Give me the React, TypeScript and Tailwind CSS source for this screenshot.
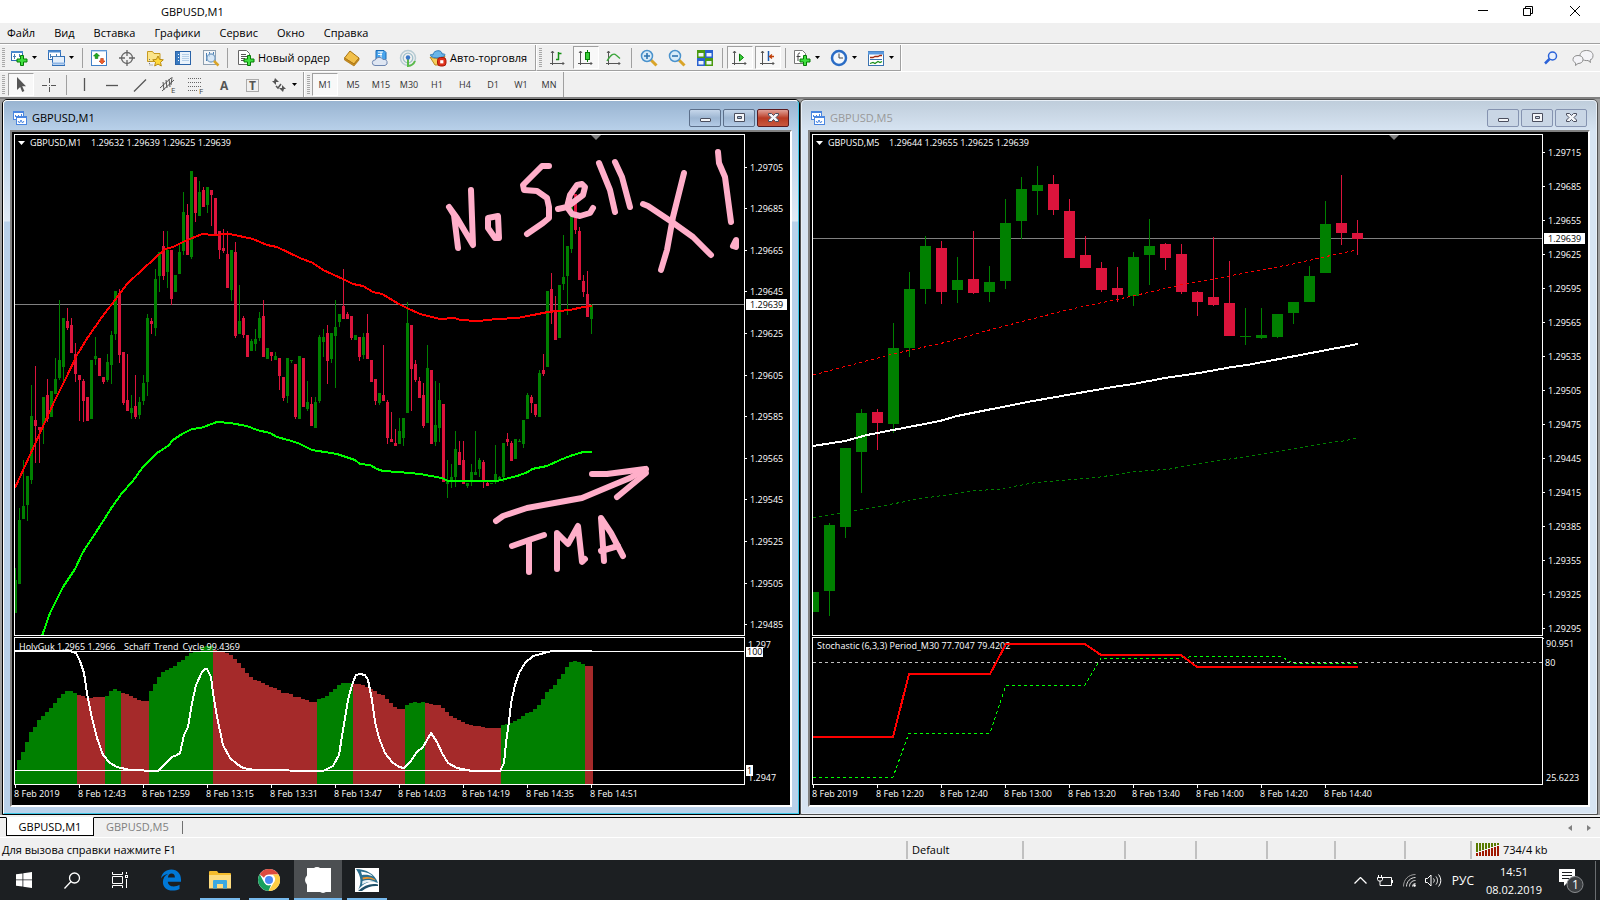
import type { ReactNode } from "react";

type Candle = [string, number, number, number, number];

const UP = "#008000";
const DOWN = "#dc143c";

// colour, high, body top, body bottom, low
const M1_CANDLES: Candle[] = [
  ["u", 568, 580, 613, 613], ["u", 508, 520, 584, 584], ["u", 460, 506, 519, 519], ["u", 476, 476, 505, 521],
  ["u", 385, 416, 480, 484], ["d", 366, 420, 426, 463], ["d", 427, 427, 430, 463], ["u", 397, 397, 425, 444],
  ["d", 379, 395, 419, 422], ["u", 391, 391, 417, 417], ["u", 358, 379, 394, 394], ["u", 300, 360, 378, 380],
  ["u", 318, 318, 367, 382], ["d", 308, 321, 328, 330], ["d", 318, 325, 353, 353], ["d", 343, 354, 374, 382],
  ["d", 375, 375, 380, 421], ["d", 379, 381, 401, 422], ["d", 397, 397, 421, 421], ["u", 360, 360, 419, 419],
  ["u", 337, 356, 359, 365], ["d", 358, 358, 376, 376], ["d", 377, 377, 382, 384], ["u", 354, 362, 380, 382],
  ["u", 331, 335, 365, 384], ["u", 291, 291, 334, 340], ["d", 289, 293, 355, 363], ["d", 352, 352, 403, 405],
  ["d", 354, 400, 411, 411], ["u", 395, 408, 413, 419], ["d", 375, 406, 417, 419], ["u", 397, 402, 415, 419],
  ["u", 375, 383, 401, 405], ["u", 314, 318, 382, 396], ["d", 318, 321, 324, 334], ["u", 269, 279, 328, 336],
  ["u", 252, 252, 276, 292], ["d", 231, 246, 276, 280], ["u", 231, 250, 272, 288], ["d", 250, 250, 299, 305],
  ["u", 275, 275, 292, 292], ["u", 244, 252, 274, 274], ["u", 192, 212, 251, 255], ["d", 204, 215, 255, 255],
  ["u", 171, 171, 257, 259], ["d", 177, 177, 213, 222], ["u", 181, 192, 216, 216], ["d", 187, 190, 207, 207],
  ["u", 187, 187, 205, 213], ["d", 190, 190, 195, 226], ["d", 198, 198, 235, 235], ["d", 231, 231, 250, 259],
  ["d", 229, 248, 251, 253], ["d", 231, 254, 288, 288], ["u", 250, 250, 290, 301], ["d", 242, 252, 336, 338],
  ["u", 285, 321, 334, 334], ["d", 316, 318, 335, 338], ["d", 335, 335, 357, 357], ["u", 339, 341, 351, 351],
  ["u", 329, 339, 344, 351], ["u", 312, 318, 338, 341], ["d", 300, 316, 357, 357], ["u", 348, 348, 359, 359],
  ["d", 352, 352, 356, 361], ["u", 352, 356, 360, 360], ["d", 358, 358, 376, 390], ["d", 377, 377, 398, 401],
  ["u", 358, 358, 396, 403], ["u", 360, 360, 361, 363], ["d", 364, 364, 417, 419], ["u", 356, 356, 419, 419],
  ["d", 358, 358, 407, 407], ["u", 381, 402, 409, 411], ["d", 397, 404, 426, 426], ["u", 397, 402, 428, 428],
  ["u", 335, 337, 401, 403], ["u", 329, 337, 342, 357], ["d", 325, 333, 361, 384], ["u", 333, 333, 359, 363],
  ["u", 300, 327, 336, 388], ["u", 314, 314, 322, 327], ["d", 269, 306, 319, 319], ["d", 312, 314, 319, 319],
  ["d", 316, 316, 338, 340], ["u", 335, 335, 340, 340], ["d", 337, 337, 357, 361], ["u", 333, 337, 355, 359],
  ["d", 314, 333, 359, 359], ["d", 360, 360, 382, 382], ["d", 379, 379, 401, 405], ["u", 393, 393, 403, 405],
  ["d", 345, 395, 401, 401], ["d", 400, 402, 438, 444], ["d", 412, 439, 442, 442], ["d", 429, 443, 446, 446],
  ["u", 418, 431, 444, 444], ["u", 418, 418, 438, 446], ["u", 302, 323, 413, 413], ["d", 325, 325, 369, 411],
  ["d", 360, 364, 380, 382], ["d", 377, 381, 398, 398], ["d", 383, 395, 426, 428], ["u", 345, 368, 423, 423],
  ["d", 370, 370, 444, 444], ["u", 381, 425, 442, 446], ["u", 383, 400, 428, 442], ["d", 404, 404, 482, 482],
  ["u", 460, 480, 484, 498], ["u", 464, 477, 480, 488], ["u", 431, 449, 477, 487], ["d", 441, 452, 465, 465],
  ["d", 441, 460, 484, 484], ["u", 483, 483, 486, 488], ["u", 464, 472, 480, 486], ["u", 431, 472, 475, 475],
  ["u", 458, 460, 469, 477], ["d", 460, 462, 481, 488], ["d", 480, 483, 486, 486], ["u", 483, 483, 484, 484],
  ["u", 445, 474, 482, 484], ["u", 476, 477, 480, 480], ["u", 443, 443, 477, 482], ["d", 433, 439, 442, 446],
  ["d", 441, 443, 461, 461], ["u", 439, 439, 459, 459], ["u", 439, 441, 442, 442], ["u", 420, 420, 444, 448],
  ["u", 393, 395, 419, 419], ["d", 395, 397, 403, 413], ["d", 404, 404, 415, 417], ["u", 370, 373, 417, 417],
  ["d", 354, 370, 374, 376], ["u", 291, 291, 367, 367], ["d", 273, 289, 311, 324], ["d", 296, 311, 340, 340],
  ["u", 285, 285, 338, 338], ["u", 235, 277, 284, 290], ["u", 246, 246, 276, 315], ["u", 197, 200, 249, 253],
  ["d", 194, 194, 230, 234], ["d", 227, 231, 280, 280], ["d", 275, 281, 292, 297], ["d", 271, 294, 317, 317],
  ["u", 304, 305, 319, 334],
];

const M5_CANDLES: Candle[] = [
  ["u", 592, 592, 612, 612], ["u", 523, 525, 591, 616], ["u", 448, 448, 527, 538], ["u", 409, 413, 452, 493],
  ["d", 409, 412, 423, 450], ["u", 323, 348, 424, 433], ["u", 272, 289, 348, 357], ["u", 236, 246, 289, 304],
  ["d", 241, 248, 292, 304], ["u", 257, 280, 290, 303], ["d", 231, 279, 293, 294], ["u", 266, 282, 292, 302],
  ["u", 199, 223, 281, 289], ["u", 177, 189, 221, 239], ["u", 166, 185, 191, 215], ["d", 175, 184, 210, 215],
  ["d", 199, 211, 258, 258], ["d", 236, 255, 268, 268], ["d", 262, 268, 290, 292], ["d", 267, 288, 295, 302],
  ["u", 252, 257, 296, 306], ["u", 219, 246, 255, 285], ["d", 243, 244, 258, 270], ["d", 244, 254, 292, 294],
  ["d", 291, 292, 302, 316], ["d", 237, 297, 305, 306], ["d", 261, 303, 336, 336], ["u", 308, 336, 337, 345],
  ["u", 308, 335, 338, 339], ["u", 314, 314, 337, 338], ["u", 302, 302, 313, 324], ["u", 266, 276, 302, 302],
  ["u", 201, 224, 273, 273], ["d", 175, 223, 233, 245], ["d", 220, 233, 239, 255],
];

// top edge of every histogram column
const HIST = [
  770, 760, 752, 742, 732, 727, 720, 716, 712, 708, 703, 698, 694, 691, 691, 693, 695, 696, 698, 698, 697, 697, 697,
  696, 691, 689, 691, 693, 694, 696, 698, 700, 701, 701, 691, 684, 677, 672, 670, 668, 666, 662, 660, 656, 653, 652,
  651, 647, 646, 646, 650, 651, 652, 653, 655, 659, 663, 668, 673, 677, 680, 681, 683, 685, 687, 688, 690, 693, 693,
  694, 697, 697, 699, 700, 702, 702, 699, 698, 696, 692, 689, 685, 683, 683, 683, 684, 684, 685, 687, 689, 691, 694,
  695, 699, 703, 707, 709, 709, 705, 703, 702, 703, 702, 703, 704, 705, 705, 708, 712, 716, 718, 720, 722, 724, 725,
  726, 726, 727, 728, 728, 728, 728, 725, 724, 723, 721, 719, 716, 713, 712, 709, 705, 699, 692, 689, 685, 679, 674,
  667, 662, 661, 662, 664, 666, 666,
];
// columns at which the histogram changes colour, starting from green
const HIST_FLIPS = [16, 23, 27, 34, 50, 76, 85, 98, 103, 122, 143];

const TMA_RED =
  "15,488 55,400 65,380 77,355 88,337 102,317 115,300 127,284 143,269 165,249 173,247 183,242 202,234 213,235 230,234 253,239 267,245 277,247 300,258 313,263 323,270 343,279 353,284 363,286 373,292 382,294 399,304 407,308 420,314 440,319 455,318 460,320 478,321 497,319 517,318 533,315 548,312 570,310 583,307 592,306";
const TMA_GREEN =
  "42,636 50,613 63,587 75,569 83,552 100,526 112,507 122,493 132,482 143,467 157,453 168,446 173,440 182,434 192,429 201,428 217,422 230,423 247,426 257,430 270,433 277,437 288,440 298,443 312,450 337,454 355,460 360,464 370,465 377,469 383,471 399,472 420,474 442,478 448,481 497,481 517,476 528,472 532,469 547,466 560,460 570,456 583,452 592,452";
const STC =
  "15,651 70,651 76,653 80,661 84,673 87,693 92,718 97,738 103,755 110,763 117,767 130,770 158,771 163,766 172,757 177,755 180,753 184,735 188,727 192,703 196,685 202,672 205,669 207,669 211,677 213,693 217,717 223,745 230,758 237,764 243,768 255,770 323,771 333,766 339,755 343,730 348,700 352,685 356,675 360,674 365,675 368,680 372,700 375,722 379,738 385,753 392,762 399,767 404,768 410,762 417,752 423,747 427,740 431,733 437,742 442,753 448,763 457,768 472,771 500,771 504,763 506,743 509,722 511,703 515,685 519,673 525,663 533,656 552,651 592,651";
const BAND_RED =
  "813,375 893,354 947,342 993,329 1067,310 1133,296 1180,285 1203,281 1229,276 1293,264 1333,255 1357,250";
const BAND_WHITE =
  "813,446 845,441 867,435 893,430 940,421 957,416 987,410 1033,401 1113,387 1133,384 1165,378 1199,373 1232,367 1247,365 1290,357 1358,344";
const BAND_GREEN =
  "813,518 877,507 918,499 953,494 973,491 1000,489 1033,483 1100,477 1133,472 1170,469 1203,463 1250,456 1327,443 1343,441 1357,438";
const STOCH_RED =
  "813,737 893,737 909,674 990,674 1006,644 1085,644 1101,655 1181,655 1197,667 1358,667";
const STOCH_GREEN =
  "813,777 893,777 909,733 990,733 1006,685 1085,685 1101,658 1181,658 1197,656 1280,656 1293,663 1357,663";

const M1_PRICES: [string, number][] = [
  ["1.29705", 167], ["1.29685", 208], ["1.29665", 250], ["1.29645", 291], ["1.29625", 333], ["1.29605", 375],
  ["1.29585", 416], ["1.29565", 458], ["1.29545", 499], ["1.29525", 541], ["1.29505", 583], ["1.29485", 624],
];
const M5_PRICES: [string, number][] = [
  ["1.29715", 152], ["1.29685", 186], ["1.29655", 220], ["1.29625", 254], ["1.29595", 288], ["1.29565", 322],
  ["1.29535", 356], ["1.29505", 390], ["1.29475", 424], ["1.29445", 458], ["1.29415", 492], ["1.29385", 526],
  ["1.29355", 560], ["1.29325", 594], ["1.29295", 628],
];

const M1_TIMES = ["8 Feb 2019", "8 Feb 12:43", "8 Feb 12:59", "8 Feb 13:15", "8 Feb 13:31", "8 Feb 13:47", "8 Feb 14:03", "8 Feb 14:19", "8 Feb 14:35", "8 Feb 14:51"];
const M5_TIMES = ["8 Feb 2019", "8 Feb 12:20", "8 Feb 12:40", "8 Feb 13:00", "8 Feb 13:20", "8 Feb 13:40", "8 Feb 14:00", "8 Feb 14:20", "8 Feb 14:40"];

const Candles = ({ data, start, step, width }: { data: Candle[]; start: number; step: number; width: number }) => (
  <g shapeRendering="crispEdges">
    {data.map(([c, hi, top, bottom, lo], i) => {
      const x = start + step * i;
      const fill = c === "u" ? UP : DOWN;
      return (
        <g key={i} fill={fill}>
          <rect x={x} y={hi} width={1} height={lo - hi} />
          <rect x={x - (width - 1) / 2} y={top} width={width} height={bottom - top} />
        </g>
      );
    })}
  </g>
);

const Histogram = () => (
  <g shapeRendering="crispEdges">
    {HIST.map((top, i) => {
      const flips = HIST_FLIPS.filter((f) => f <= i).length;
      return <rect key={i} x={13 + 4 * i} y={top} width={4} height={784 - top} fill={flips % 2 ? "#a52a2a" : UP} />;
    })}
  </g>
);

// Freehand pen notes left on the M1 chart
const PenNotes = () => (
  <g fill="none" stroke="#ffaec9" strokeWidth={6} strokeLinecap="round" strokeLinejoin="round" role="img" aria-label="No Sell X! TMA">
    <polyline points="458,248 454,215 449,207 457,218 473,245 471,190" />
    <polygon points="488,218 498,216 499,238 495,238 488,228" />
    <polyline points="549,166 542,166 523,185 524,190 537,191 547,198 549,207 549,218 543,223 527,234" />
    <polyline points="558,209 567,207 583,195 585,187 582,184 577,185 570,195 567,207 572,214 580,216 590,213 593,208" />
    <polyline points="599,163 610,190 615,212" />
    <polyline points="615,162 622,177 630,207" />
    <polyline points="643,204 648,206 672,222 693,237 711,255" />
    <polyline points="684,173 673,217 667,250 661,270" />
    <polyline points="718,152 719,163 725,177 731,222" />
    <polygon points="736,240 733,246 736,247" />
    <polyline points="496,521 503,516 527,508 582,498 613,485 630,478 646,469" />
    <polyline points="592,474 607,474 645,469 646,473 617,497" />
    <polyline points="512,546 529,540 544,535" />
    <polyline points="529,541 529,572" />
    <polyline points="557,569 557,533 568,544 578,526 582,562 585,559" />
    <polyline points="604,561 601,518 611,533 623,556" />
    <polyline points="601,551 618,546" />
  </g>
);

const PriceAxis = ({ prices, current, currentY }: { prices: [string, number][]; current: string; currentY: number }) => (
  <svg className="w-[45px] shrink-0 fill-white" shapeRendering="crispEdges">
    <g transform="translate(0 -134)">
      {prices.map(([label, y]) => (
        <g key={label}>
          <rect x={0} y={y} width={2} height={1} />
          <text x={5} y={y + 4}>{label}</text>
        </g>
      ))}
      <rect x={1} y={currentY - 5} width={41} height={11} />
      <text x={5} y={currentY + 4} className="fill-black">{current}</text>
    </g>
  </svg>
);

const TimeAxis = ({ times }: { times: string[] }) => (
  <svg className="h-[20px] w-full fill-white" shapeRendering="crispEdges">
    {times.map((t, i) => (
      <g key={t}>
        <rect x={1 + 64 * i} y={0} width={1} height={3} />
        <text x={64 * i} y={12}>{t}</text>
      </g>
    ))}
  </svg>
);

const WindowIcon = () => (
  <svg width={14} height={14} viewBox="0 0 14 14" fill="#fff" stroke="#4a86e0" shapeRendering="crispEdges">
    <rect x={0.5} y={0.5} width={10} height={8} />
    <path d="M0 1.5h11M2.500 4v2M2 5.500h4M5.500 4v2M8.500 3v2" />
    <rect x={3.5} y={5.5} width={10} height={8} />
    <path d="M3 6.500h11" />
    <path d="M5 10l1.500 2 1.500-3 1.500 3 1.500-2" fill="none" shapeRendering="auto" />
  </svg>
);

const glyphs = {
  min: <rect x={2.5} y={5.5} width={10} height={3} rx={0.5} />,
  max: <path d="M2.500 .5h10v8h-10zM5.500 3.500v2h4v-2z" fillRule="evenodd" />,
  close: <path d="M2.500.5h3l2 2 2-2h3v1.500L10 4.500l2.500 2.500v1.500h-3l-2-2-2 2h-3V7L5 4.500 2.500 2z" />,
};

const FrameButton = ({ kind, active, label }: { kind: keyof typeof glyphs; active: boolean; label: string }) => {
  const tone = !active
    ? "border-[#8593b0] bg-[#c9d6e5]"
    : kind === "close"
      ? "border-[#5a1a20] bg-linear-to-b from-[#e0a097] via-[#b93a22] to-[#c8583f]"
      : "border-[#5c6f8a] bg-linear-to-b from-[#c5d6ea] via-[#9db6d2] to-[#b4cbe6]";
  return (
    <button aria-label={label} className={`flex h-[18px] w-[32px] items-center justify-center rounded-[2px] border ${tone}`}>
      <svg width={15} height={9} viewBox="0 0 15 9" fill="#f4f6f9" stroke="#4a4e5e">{glyphs[kind]}</svg>
    </button>
  );
};

type ChartWindowProps = {
  title: string;
  active?: boolean;
  main: ReactNode;
  axis: ReactNode;
  sub: ReactNode;
  subAxis: ReactNode;
  times: string[];
};

const ChartWindow = ({ title, active = false, main, axis, sub, subAxis, times }: ChartWindowProps) => (
  <section
    className={`flex min-w-0 flex-1 flex-col rounded-t-[5px] border ${active ? "border-black" : "border-[#505050]"}`}
  >
    <div
      className={`flex min-h-0 flex-1 flex-col rounded-t-[4px] border px-[6px] pb-[6px] ${
        active
          ? "border-white border-r-[#3cc8e8] border-b-[#3cc8e8] bg-[linear-gradient(to_bottom,#99b4d1_0,#b9d1ea_30px,#e0eaf5_120px,#b9d1ea_121px)]"
          : "border-[#e8eff7] bg-[linear-gradient(to_bottom,#bfcddb_0,#d7e4f2_30px)]"
      }`}
    >
      <header className="flex h-[29px] shrink-0 items-center pt-[4px] pr-[3px] pl-[3px]">
        <WindowIcon />
        <h2 className={`flex-1 pl-[5px] ${active ? "text-black" : "text-[#999]"}`}>{title}</h2>
        <div className="flex gap-[2px]">
          <FrameButton kind="min" active={active} label="Свернуть" />
          <FrameButton kind="max" active={active} label="Развернуть" />
          <FrameButton kind="close" active={active} label="Закрыть" />
        </div>
      </header>
      <div className="flex min-h-0 flex-1 flex-col border-2 border-t-[#808080] border-r-white border-b-white border-l-[#808080] bg-black pt-[2px] pl-[2px] text-[9px]">
        <div className="flex min-h-0 flex-1">
          <svg className="min-w-0 flex-1 border border-white fill-white">{main}</svg>
          {axis}
        </div>
        <div className="mt-px flex h-[148px] shrink-0">
          <svg className="min-w-0 flex-1 border border-white fill-white">{sub}</svg>
          {subAxis}
        </div>
        <TimeAxis times={times} />
      </div>
    </div>
  </section>
);

const M1Window = () => (
  <ChartWindow
    title="GBPUSD,M1"
    active
    times={M1_TIMES}
    main={
      <g transform="translate(-15 -135)">
        <path d="M591 135h10l-5 5z" fill="#808080" />
        <rect x={15} y={304} width="100%" height={1} fill="#808080" />
        <Candles data={M1_CANDLES} start={15} step={4} width={3} />
        <polyline points={TMA_RED} fill="none" stroke="#f00" strokeWidth={2} shapeRendering="crispEdges" />
        <polyline points={TMA_GREEN} fill="none" stroke="#0f0" strokeWidth={2} shapeRendering="crispEdges" />
        <path d="M18 141h7l-3.500 4z" />
        <text x={30} y={146}>GBPUSD,M1</text>
        <text x={91} y={146}>1.29632 1.29639 1.29625 1.29639</text>
        <PenNotes />
      </g>
    }
    axis={<PriceAxis prices={M1_PRICES} current="1.29639" currentY={304} />}
    sub={
      <g transform="translate(-15 -638)">
        <Histogram />
        <text x={19} y={650}>HolyGuk 1.2965 1.2966</text>
        <text x={124} y={650}>Schaff_Trend_Cycle 99.4369</text>
        <rect x={15} y={651} width="100%" height={1} />
        <rect x={15} y={770} width="100%" height={1} />
        <polyline points={STC} fill="none" stroke="#fff" strokeWidth={2} shapeRendering="crispEdges" />
      </g>
    }
    subAxis={
      <svg className="w-[45px] shrink-0 fill-white">
        <g transform="translate(0 -637)">
          <text x={3} y={648}>1.297</text>
          <rect x={1} y={647} width={17} height={10} />
          <text x={2} y={655} className="fill-black">100</text>
          <text x={3} y={781}>1.2947</text>
          <rect x={1} y={765} width={7} height={11} />
          <text x={2} y={774} className="fill-black">1</text>
        </g>
      </svg>
    }
  />
);

const M5Window = () => (
  <ChartWindow
    title="GBPUSD,M5"
    times={M5_TIMES}
    main={
      <g transform="translate(-813 -135)">
        <path d="M1389 135h10l-5 5z" fill="#808080" />
        <rect x={813} y={238} width="100%" height={1} fill="#808080" />
        <Candles data={M5_CANDLES} start={813} step={16} width={11} />
        <g fill="none" shapeRendering="crispEdges">
          <polyline points={BAND_RED} stroke="#f00" strokeDasharray="3 3" />
          <polyline points={BAND_GREEN} stroke={UP} strokeDasharray="3 3" />
          <polyline points={BAND_WHITE} stroke="#fff" strokeWidth={2} />
        </g>
        <path d="M816 141h7l-3.500 4z" />
        <text x={828} y={146}>GBPUSD,M5</text>
        <text x={889} y={146}>1.29644 1.29655 1.29625 1.29639</text>
      </g>
    }
    axis={<PriceAxis prices={M5_PRICES} current="1.29639" currentY={238} />}
    sub={
      <g transform="translate(-813 -638)">
        <text x={817} y={649}>Stochastic (6,3,3) Period_M30 77.7047 79.4202</text>
        <g fill="none" shapeRendering="crispEdges">
          <path d="M813 662.5H4000" stroke="#c0c0c0" strokeDasharray="3 3" />
          <polyline points={STOCH_GREEN} stroke="#0f0" strokeDasharray="3 3" />
          <polyline points={STOCH_RED} stroke="#f00" strokeWidth={2} />
        </g>
      </g>
    }
    subAxis={
      <svg className="w-[45px] shrink-0 fill-white">
        <g transform="translate(0 -637)">
          <rect x={0} y={638} width={1} height={1} />
          <text x={3} y={647}>90.951</text>
          <text x={2} y={666}>80</text>
          <text x={3} y={781}>25.6223</text>
        </g>
      </svg>
    }
  />
);

/* ---------- toolbar ---------- */

const Ico = ({ children, size = 18 }: { children: ReactNode; size?: number }) => (
  <svg width={size} height={size} viewBox="0 0 18 18" fill="none">{children}</svg>
);

const Plus = () => <path d="M10.500 6.500h3v3.500h3.500v3h-3.500v3.500h-3v-3.500h-3.500v-3h3.500z" fill="#3fe03f" stroke="#067a06" />;
const Axes = () => <path d="M3.500 2v14M1 14.500h14M2 4l1.500-2L5 4M13.500 13l1.500 1.500-1.500 1.500" stroke="#555" />;

const icons = {
  newChart: <Ico><rect x="1.500" y="2.500" width="11" height="9" fill="#fff" stroke="#2f6db5" /><path d="M1 3h12" stroke="#4b8ad0" strokeWidth="2" /><path d="M4.500 5v5M3 7.500h3M9.500 5v3" stroke="#4b7fb5" /><Plus /></Ico>,
  profiles: <Ico><rect x="1.500" y="1.500" width="12" height="9" fill="#fff" stroke="#2f6db5" /><path d="M1 2.500h13" stroke="#4b8ad0" strokeWidth="2" /><rect x="5.500" y="7.500" width="12" height="9" fill="#e5effa" stroke="#2f6db5" /><path d="M5 14.500h13" stroke="#8db5e5" strokeWidth="2" /><path d="M3.500 5v4M3 7.500h10M9.500 5v3" stroke="#4b7fb5" /></Ico>,
  market: <Ico><rect x="1.500" y="1.500" width="15" height="15" fill="#fff" stroke="#3f80c8" /><path d="M1 2h16" stroke="#7fb0e5" strokeWidth="1" /><path d="M6.500 4l3 3H7.800v2.500H5.200V7H3.500z" fill="#1faa1f" stroke="#067a06" strokeWidth=".6" /><path d="M12 15l-3-3h1.700V9.500h2.600V12H15z" fill="#f0602a" stroke="#b5300a" strokeWidth=".6" /></Ico>,
  data: <Ico><circle cx="9" cy="9" r="5.500" stroke="#666" strokeWidth="1.300" /><path d="M9 1v6M9 11v6M1 9h6M11 9h6" stroke="#666" strokeWidth="1.300" /></Ico>,
  navigator: <Ico><path d="M1.500 2.500h5l1.500 2h6v8h-12.500z" fill="#fbe58a" stroke="#c79a20" /><path d="M3.500 10v6h4" stroke="#777" strokeDasharray="1 1" /><path d="M12 7l1.600 3.400 3.700.4-2.800 2.500.8 3.700-3.300-1.900-3.300 1.900.8-3.700L6.700 10.800l3.700-.4z" fill="#ffd93b" stroke="#b98a10" /></Ico>,
  terminal: <Ico><rect x="1.500" y="2.500" width="15" height="13" fill="#eaf3fc" stroke="#2a63a8" /><rect x="2" y="3" width="4" height="12" fill="#3a7ac0" /><path d="M4.500 5v1M4.500 8v1M4.500 11v1" stroke="#fff" /><path d="M8 5.500h7M8 7.500h7M8 9.500h7M8 11.500h7" stroke="#b5cfe8" /></Ico>,
  tester: <Ico><rect x="1.500" y="1.500" width="12" height="14" fill="#f4f6f8" stroke="#8fa0b0" /><path d="M4.500 4v8M7.500 3v5M11.500 3v4" stroke="#4a7fb5" /><circle cx="9" cy="9" r="4" fill="#cfe3f5cc" stroke="#7fa5c8" strokeWidth="1.300" /><path d="M12 12l4.500 4.500" stroke="#d9a428" strokeWidth="2.500" /></Ico>,
  order: <Ico><path d="M1.500 1.500h8l3 3v11h-11z" fill="#fff" stroke="#666" /><path d="M4 5.500h5M4 7.500h6M4 9.500h4M4 11.500h4" stroke="#555" /><Plus /></Ico>,
  book: <Ico><path d="M7 2l9 7-5 6-9.500-6z" fill="#f2c04a" stroke="#a87412" /><path d="M1.500 9v2l9.500 6 5-6V9l-5 6z" fill="#c98c1e" stroke="#a87412" strokeWidth=".7" /></Ico>,
  cloud: <Ico><path d="M5 1.500h8l2 2v7H5z" fill="#4aa5ec" stroke="#1a6ab5" /><path d="M7 3h5M7 5.500h4M10 3v7" stroke="#fff" /><path d="M4 16.500a2.800 2.800 0 0 1 .3-5.600A4.300 4.300 0 0 1 12 10.500a3 3 0 1 1 2 6z" fill="#dfe6f2" stroke="#6d86b0" /></Ico>,
  signals: <Ico><circle cx="9" cy="9" r="7.500" stroke="#b8ccd4" strokeWidth="1.500" /><circle cx="9" cy="9" r="4.800" stroke="#9fbfca" strokeWidth="1.300" /><path d="M9 9v8a8 8 0 0 0 7-5" stroke="#5aba4a" strokeWidth="2" /><circle cx="9" cy="8.500" r="2.200" fill="#3a78c8" /></Ico>,
  auto: <Ico><path d="M1 8c4 2 12 2 15-1l-4 9H6z" fill="#f5cf5a" stroke="#b98a20" /><path d="M4 6c0-5 9-6 9-1 3-.5 4 1 2 2-4 2.500-11 2.500-13 0-1.500-1.500 0-2 2-1z" fill="#6ab5e8" stroke="#2f7ab8" /><rect x="8.500" y="8.500" width="8.500" height="8.500" rx="3" fill="#e0301a" stroke="#a51808" /><rect x="11.200" y="11.200" width="3.200" height="3.200" fill="#fff" /></Ico>,
  bars: <Ico><Axes /><path d="M9.500 3v8M9.500 4.500h3M7 10.500h3" stroke="#159015" strokeWidth="1.500" /></Ico>,
  candles: <Ico><Axes /><path d="M10.500 1v12" stroke="#067a06" /><rect x="8.500" y="3.500" width="4" height="7" fill="#3ad03a" stroke="#067a06" /></Ico>,
  line: <Ico><Axes /><path d="M2 12c4-7 7-8 9-6l4 3.500" stroke="#3aa53a" strokeWidth="1.300" /></Ico>,
  zoomIn: <Ico><path d="M10.500 10.500l6 6" stroke="#d9a428" strokeWidth="3" /><circle cx="7" cy="7" r="5.500" fill="#d8ebf8" stroke="#4a92cc" strokeWidth="1.500" /><path d="M7 4v6M4 7h6" stroke="#2f74b0" strokeWidth="1.600" /></Ico>,
  zoomOut: <Ico><path d="M10.500 10.500l6 6" stroke="#d9a428" strokeWidth="3" /><circle cx="7" cy="7" r="5.500" fill="#d8ebf8" stroke="#4a92cc" strokeWidth="1.500" /><path d="M4 7h6" stroke="#2f74b0" strokeWidth="1.600" /></Ico>,
  tile: <Ico><path d="M1 1h8v8H1zM9 9h8v8H9z" fill="#4a9a10" /><path d="M9 1h8v8H9zM1 9h8v8H1z" fill="#2a62d0" /><path d="M2.500 4h5v3.500h-5zM10.500 4h5v3.500h-5zM2.500 12h5v3.500h-5zM10.500 12h5v3.500h-5z" fill="#eef4fb" /></Ico>,
  scroll: <Ico><Axes /><path d="M8.500 5l4 3.500-4 3.500z" fill="#3ad03a" stroke="#067a06" /></Ico>,
  shift: <Ico><Axes /><path d="M9.500 2v10" stroke="#1a5ab0" strokeWidth="1.500" /><path d="M15 7.500h-4M13 5.500l-2.500 2 2.500 2" stroke="#c0400a" strokeWidth="1.300" /></Ico>,
  indicators: <Ico><path d="M1.500 1.500h8l3 3v10h-11z" fill="#fff" stroke="#777" /><path d="M7 4c-2 0-2 1-2 3v5M3.500 7.500h4" stroke="#444" /><Plus /></Ico>,
  clock: <Ico><circle cx="9" cy="9" r="7" fill="#f4f8fc" stroke="#2a6cc5" strokeWidth="2.500" /><path d="M9 4.500V9h4" stroke="#444" /></Ico>,
  template: <Ico><rect x="1.500" y="2.500" width="15" height="14" fill="#fff" stroke="#3a72b0" /><path d="M1 4h16" stroke="#5a9ae0" strokeWidth="3" /><path d="M3 8.500h3l2-1h3l2-1h2" stroke="#a02a10" strokeWidth="1.300" /><path d="M3 10.500h12" stroke="#3a72b0" /><path d="M3 14.500l3-1 2 1 3-2 2 1 2-1" stroke="#1a901a" strokeWidth="1.200" /></Ico>,
  cursor: <Ico><path d="M5 1v13l3.200-3 2 5 2.200-1-2.200-4.700H14z" fill="#555" /></Ico>,
  cross: <Ico><path d="M9.500 2v5M9.500 11v5M2 9.500h5M11 9.500h5M9 9.500h1" stroke="#555" /></Ico>,
  vline: <Ico><path d="M9.500 2v13" stroke="#555" strokeWidth="1.300" /></Ico>,
  hline: <Ico><path d="M3 9.500h12" stroke="#555" strokeWidth="1.300" /></Ico>,
  slant: <Ico><path d="M3 15.500L15 3.500" stroke="#555" strokeWidth="1.300" /></Ico>,
  channel: <Ico><path d="M1 12L12 2M3 15L15 4M4 6l1 8M7 4l1 8M10 3l1 8M13 1l-1 8" stroke="#555" /><text x="12" y="17" fontSize="8" fill="#444">E</text></Ico>,
  fibo: <Ico><path d="M1 2.500h14M1 6.500h14M1 10.500h14M1 14.500h9" stroke="#666" strokeDasharray="1 1" /><text x="12" y="17.500" fontSize="8" fill="#444">F</text></Ico>,
  text: <Ico><text x="5" y="14" fontSize="12" fontWeight="700" fill="#555">A</text></Ico>,
  label: <Ico><rect x="3.500" y="3.500" width="12" height="12" stroke="#666" strokeDasharray="1 1" /><text x="6" y="14" fontSize="12" fontWeight="700" fill="#555">T</text></Ico>,
  arrows: <Ico><path d="M5 2l4 4-3 0 0 3-4-4 2 0zM13 16l-4-4h3V9l4 4h-2z" fill="#555" /><path d="M6 10l2 2 3-4" stroke="#555" strokeWidth="1.500" /></Ico>,
};

type IconName = keyof typeof icons;

const Grip = () => (
  <span className="mr-px ml-[2px] h-[20px] w-[3px] shrink-0 bg-[repeating-linear-gradient(to_bottom,#a8a8a8_0,#a8a8a8_1px,#f0f0f0_1px,#f0f0f0_2px)]" />
);

const Sep = () => <span className="mx-[2px] h-[20px] w-px shrink-0 bg-[#a0a0a0]" />;

const Caret = () => (
  <svg width={5} height={3} viewBox="0 0 5 3"><path d="M0 0h5L2.500 3z" /></svg>
);

const PRESSED = "border-t-[#a0a0a0] border-l-[#a0a0a0] border-r-white border-b-white bg-[#f8f8f8]";

const Tool = ({ name, label, pressed = false }: { name: IconName; label: string; pressed?: boolean }) => (
  <button aria-label={label} className={`mx-px flex h-[23px] w-[26px] shrink-0 items-center justify-center border ${pressed ? PRESSED : "border-transparent"}`}>
    {icons[name]}
  </button>
);

const DropTool = ({ name, label }: { name: IconName; label: string }) => (
  <button aria-label={label} className="flex h-[23px] w-[37px] shrink-0 items-center gap-[4px] pl-[4px]">
    {icons[name]}
    <Caret />
  </button>
);

const WideTool = ({ name, children }: { name: IconName; children: string }) => (
  <button className="flex h-[23px] shrink-0 items-center gap-[3px] pr-[8px] pl-[7px]">
    {icons[name]}
    <span>{children}</span>
  </button>
);

const MENU = ["Файл", "Вид", "Вставка", "Графики", "Сервис", "Окно", "Справка"];
const PERIODS = ["M1", "M5", "M15", "M30", "H1", "H4", "D1", "W1", "MN"];

const Toolbars = () => (
  <div className="shrink-0">
    <div className="flex h-[26px] items-stretch">
      <div className="flex items-center border-r border-b border-[#a0a0a0]">
        <Grip />
        <DropTool name="newChart" label="Новый график" />
        <DropTool name="profiles" label="Профили" />
        <Sep />
        <Tool name="market" label="Обзор рынка" />
        <Tool name="data" label="Окно данных" />
        <Tool name="navigator" label="Навигатор" />
        <Tool name="terminal" label="Терминал" />
        <Tool name="tester" label="Тестер стратегий" />
        <Sep />
        <WideTool name="order">Новый ордер</WideTool>
        <Tool name="book" label="MetaEditor" />
        <Tool name="cloud" label="Облако" />
        <Tool name="signals" label="Сигналы" />
        <WideTool name="auto">Авто-торговля</WideTool>
      </div>
      <div className="flex items-center gap-px border-r border-b border-[#a0a0a0] border-l border-l-white">
        <Grip />
        <div className="flex">
          <Tool name="bars" label="Бары" />
          <Tool name="candles" label="Свечи" pressed />
          <Tool name="line" label="Линия" />
        </div>
        <Sep />
        <div className="flex">
          <Tool name="zoomIn" label="Увеличить" />
          <Tool name="zoomOut" label="Уменьшить" />
          <Tool name="tile" label="Плитка" />
        </div>
        <Sep />
        <div className="flex">
          <Tool name="scroll" label="Автопрокрутка" pressed />
          <Tool name="shift" label="Сдвиг графика" pressed />
        </div>
        <Sep />
        <div className="flex">
          <DropTool name="indicators" label="Индикаторы" />
          <DropTool name="clock" label="Периоды" />
          <DropTool name="template" label="Шаблоны" />
        </div>
      </div>
      <div className="flex flex-1 items-center justify-end gap-[14px] border-l border-white pr-[6px]">
        <button aria-label="Поиск">
          <svg width={14} height={14} viewBox="0 0 14 14" fill="none" stroke="#2a62d8"><circle cx="8.500" cy="5" r="4" fill="#e8f0fc" strokeWidth="1.500" /><path d="M5.500 8L1 12.500" strokeWidth="2.500" /></svg>
        </button>
        <button aria-label="Чат">
          <svg width={22} height={16} viewBox="0 0 22 16" fill="#f4f4f8" stroke="#8c8c8c"><path d="M14.500.5c4 0 6.500 2 6.500 5s-1.500 4-3 4.500l.5 2.500-2.500-2c-5 .5-8-2-8-5s2.500-5 6.500-5z" /><path d="M6 5.500c3 0 5 1.500 5 4s-2 4-5 4l-2.500 2 .2-2.500C2 12 1 11 1 9.500c0-2.500 2-4 5-4z" /></svg>
        </button>
      </div>
    </div>
    <div className="flex h-[26px] items-stretch border-t border-white">
      <div className="flex items-center gap-px border-r border-[#a0a0a0]">
        <Grip />
        <div className="flex">
          <Tool name="cursor" label="Курсор" pressed />
          <Tool name="cross" label="Перекрестие" />
        </div>
        <Sep />
        <div className="flex">
          <Tool name="vline" label="Вертикальная линия" />
          <Tool name="hline" label="Горизонтальная линия" />
          <Tool name="slant" label="Трендовая линия" />
          <Tool name="channel" label="Канал" />
          <Tool name="fibo" label="Фибоначчи" />
          <Tool name="text" label="Текст" />
          <Tool name="label" label="Текстовая метка" />
          <DropTool name="arrows" label="Стрелки" />
        </div>
      </div>
      <div className="flex items-center border-r border-l border-[#a0a0a0] border-l-white text-[9px] text-[#333]">
        <Grip />
        {PERIODS.map((p) => (
          <button key={p} className={`mx-px h-[23px] w-[26px] shrink-0 border ${p === "M1" ? PRESSED : "border-transparent"}`}>{p}</button>
        ))}
      </div>
    </div>
  </div>
);

/* ---------- bottom ---------- */

const StatusBar = () => (
  <footer className="flex h-[22px] shrink-0 items-center pt-px">
    <p className="flex-1 pl-[2px]">Для вызова справки нажмите F1</p>
    <div className="flex h-[18px] items-center">
      <span className="flex h-full w-[116px] items-center border-l-2 border-[#c0c0c0] pl-[4px]">Default</span>
      <span className="h-full w-[102px] border-l-2 border-[#c0c0c0]" />
      <span className="h-full w-[71px] border-l-2 border-[#c0c0c0]" />
      <span className="h-full w-[71px] border-l-2 border-[#c0c0c0]" />
      <span className="h-full w-[68px] border-l-2 border-[#c0c0c0]" />
      <span className="h-full w-[70px] border-l-2 border-[#c0c0c0]" />
      <span className="h-full w-[66px] border-l-2 border-[#c0c0c0]" />
      <span className="flex h-full w-[130px] items-center gap-[4px] border-l-2 border-[#c0c0c0] pl-[4px]">
        <svg width={23} height={13} shapeRendering="crispEdges">
          {[0, 1, 2, 3, 4, 5, 6, 7].map((i) => (
            <g key={i}>
              <rect x={i * 3} y={0} width={2} height={9 - i} fill="#5a7a00" />
              <rect x={i * 3} y={10 - i} width={2} height={3 + i} fill="#a01800" />
            </g>
          ))}
        </svg>
        734/4 kb
      </span>
    </div>
  </footer>
);

const TaskButton = ({ label, open = false, active = false, children }: { label: string; open?: boolean; active?: boolean; children: ReactNode }) => (
  <button
    aria-label={label}
    className={`flex h-full w-[48px] shrink-0 flex-col items-center ${active ? "bg-[#4c4f52]" : ""}`}
  >
    <span className="flex flex-1 items-center pt-[2px]">{children}</span>
    <span className={`h-[2px] ${active ? "w-full" : "w-[40px]"} ${open ? "bg-[#76b9ed]" : ""}`} />
  </button>
);

const Taskbar = () => (
  <nav className="flex h-[40px] shrink-0 bg-[#1c1f22] text-white">
    <TaskButton label="Пуск">
      <svg width={16} height={16} viewBox="0 0 16 16" fill="#fff"><path d="M0 2.300L6.500 1.400v6.100H0zM7.300 1.300L16 0v7.500H7.300zM0 8.300h6.500v6.300L0 13.700zM7.300 8.300H16V16l-8.700-1.300z" /></svg>
    </TaskButton>
    <TaskButton label="Поиск">
      <svg width={17} height={17} viewBox="0 0 17 17" fill="none" stroke="#fff" strokeWidth={1.3}><circle cx="10.500" cy="6" r="5" /><path d="M7 9.500L.5 16.500" /></svg>
    </TaskButton>
    <TaskButton label="Представление задач">
      <svg width={17} height={16} viewBox="0 0 17 16" fill="none" stroke="#fff"><path d="M.5 0v2.500h10V0M.5 16v-2.500h10V16M.5 4.500h10v7H.5zM14.500 0v2M14.500 7v9" /><rect x="13.500" y="3.500" width="2" height="2" /></svg>
    </TaskButton>
    <div className="flex gap-px pl-[3px]">
      <TaskButton label="Edge">
        <svg width={20} height={22} viewBox="0 0 20 22"><path d="M0 9.500C.8 4 4.700.5 10.300.5 16.500.5 20 5 20 10.500v2.300H6.800c.2 3 2.700 4.700 5.700 4.700 2.300 0 4.300-.6 6-1.700V20c-2 1-4.200 1.600-7 1.600-5.800 0-9.600-3.300-9.600-8.600 0-3.600 2-6.600 5.200-8.200C3.800 5.500 1.500 7 0 9.500zm6.900-1h7c0-2.600-1.200-4-3.300-4-2 0-3.400 1.500-3.700 4z" fill="#0078d7" /></svg>
      </TaskButton>
      <TaskButton label="Проводник" open>
        <svg width={22} height={18} viewBox="0 0 22 18"><path d="M0 1a1 1 0 0 1 1-1h7l1.500 2H21a1 1 0 0 1 1 1v14H0z" fill="#f5bc2c" /><path d="M0 4h22v13.500H0z" fill="#fddc80" /><path d="M4 17.500V10a1 1 0 0 1 1-1h12a1 1 0 0 1 1 1v7.500h-4V13H8v4.500z" fill="#3ba9e0" /></svg>
      </TaskButton>
      <TaskButton label="Chrome" open>
        <svg width={22} height={22} viewBox="0 0 22 22"><circle cx="11" cy="11" r="11" fill="#fff" /><path d="M11 0a11 11 0 0 1 9.500 5.500H11A5.500 5.500 0 0 0 6 8.700L1.700 5.200A11 11 0 0 1 11 0z" fill="#dd4b3e" /><path d="M20.500 5.500A11 11 0 0 1 10.500 22l5.200-8.200A5.500 5.500 0 0 0 14.500 5.500z" fill="#fdce45" /><path d="M1.700 5.200l4.600 8.600A5.500 5.500 0 0 0 13 16.100L10.500 22A11 11 0 0 1 1.700 5.200z" fill="#17a05e" /><circle cx="11" cy="11" r="5" fill="#fff" /><circle cx="11" cy="11" r="4" fill="#4a8af4" /></svg>
      </TaskButton>
      <TaskButton label="GBPUSD" open active>
        <svg width={26} height={26} viewBox="0 0 26 26" fill="#fff"><rect x="2" y="1" width="24" height="24" /><circle cx="6" cy="13" r="6" /><circle cx="12" cy="5" r="5" /><circle cx="18" cy="21" r="5" /></svg>
      </TaskButton>
      <TaskButton label="Terminal" open>
        <svg width={24} height={24} viewBox="0 0 24 24">
          <rect width="24" height="24" fill="#fff" />
          <path d="M1 1c10 0 19 5 22 14-7-3-14-1-20 7 4-7 3-14-2-21z" fill="#2b6f8e" />
          <path d="M6 3.500c6 .5 10 2.500 12 5-3-1.500-7-2-11-1.500z" fill="#fff" />
          <path d="M7.500 9.500c5-1.200 9-.3 12 1.500l.8 1.500c-4-2-8-2.500-12.500-1z" fill="#f0932a" />
          <path d="M7.500 13c4-1.500 8-1.300 13 1-5-.5-9 0-13.500 2.500z" fill="#e8f2f6" />
          <path d="M3 23c6-6 13-8 20-6.500V18c-6-.5-11 1-16 5z" fill="#1f4f68" />
        </svg>
      </TaskButton>
    </div>
    <div className="ml-auto flex items-center pt-px">
      <button aria-label="Скрытые значки" className="mr-[10px]">
        <svg width={13} height={7} viewBox="0 0 13 7" fill="none" stroke="#fff" strokeWidth={1.3}><path d="M.5 6.500l6-6 6 6" /></svg>
      </button>
      <svg className="mr-[10px]" width={16} height={12} viewBox="0 0 16 12" fill="none" stroke="#fff"><path d="M5 2.500h9.500v8h-9.500M15.500 5v3M1.500 0v2M4.500 0v2M.5 2.500h5v2l-1 1.500h-3l-1-1.500zM3 6v4.500h2.500" /></svg>
      <svg className="mr-[9px]" width={13} height={13} viewBox="0 0 13 13" fill="none" stroke="#ddd"><path d="M.5 12.500c0-7 5-12 12-12" stroke="#999" /><path d="M3.500 12.500c0-5 4-9 9-9M6.500 12.500c0-3.500 2.500-6 6-6M9.500 12.500c0-2 1-3 3-3" /><circle cx="11.500" cy="11.500" r="1" fill="#fff" /></svg>
      <svg className="mr-[10px]" width={17} height={13} viewBox="0 0 17 13" fill="none" stroke="#fff"><path d="M.5 4.500h2L6 1v11L2.500 8.500h-2zM8.500 4.500c1 1.500 1 2.500 0 4M11 2.500c2 2.500 2 5.500 0 8M13.500.5c3 3.500 3 8.500 0 12" /></svg>
      <span className="mr-[12px] text-[12px]">РУС</span>
      <div className="flex w-[56px] flex-col items-center text-[11px] leading-[18px]">
        <span>14:51</span>
        <span>08.02.2019</span>
      </div>
      <button aria-label="Уведомления" className="mr-[11px] ml-[17px]">
        <svg width={25} height={25} viewBox="0 0 25 25"><path d="M0 1h16v13H9l-4 4v-4H0z" fill="#fff" /><path d="M3 4.500h10M3 7.500h10M3 10.500h7" stroke="#1c1f22" /><circle cx="16" cy="16.500" r="8" fill="#3c3f42" stroke="#8a8d90" /><text x="13" y="21" fontSize="12" fill="#fff">1</text></svg>
      </button>
      <span className="h-[40px] w-[5px] border-l border-[#6a6d70]" />
    </div>
  </nav>
);

export default function App() {
  return (
    <div className="flex h-screen flex-col overflow-hidden bg-[#f0f0f0] font-['Open_Sans','Noto_Sans',sans-serif] text-[11px] leading-[14px] text-black">
      <header className="flex h-[23px] shrink-0 items-center bg-white pl-[161px]">
        <h1 className="flex-1">GBPUSD,M1</h1>
        <button aria-label="Свернуть" className="flex h-full w-[46px] items-center justify-center">
          <svg width={10} height={10} viewBox="0 0 10 10"><path d="M0 3.500h10" stroke="#000" /></svg>
        </button>
        <button aria-label="Восстановить" className="flex h-full w-[44px] items-center justify-center pb-[2px]">
          <svg width={10} height={10} viewBox="0 0 10 10" fill="none" stroke="#000"><path d="M.5 2.500h7v7h-7zM2.500 2.500v-2h7v7h-2" /></svg>
        </button>
        <button aria-label="Закрыть" className="flex h-full w-[50px] items-center justify-center pb-[2px]">
          <svg width={10} height={10} viewBox="0 0 10 10"><path d="M0 0l10 10M10 0L0 10" stroke="#000" /></svg>
        </button>
      </header>

      <nav className="flex h-[21px] shrink-0 items-center gap-[19px] border-b border-[#a0a0a0] pl-[7px]">
        {MENU.map((m) => (
          <button key={m}>{m}</button>
        ))}
      </nav>
      <div className="h-px shrink-0 bg-white" />

      <Toolbars />

      <main className="flex min-h-0 flex-1 border-t-2 border-t-[#808080] bg-[#a0a0a0] px-[2px]">
        <M1Window />
        <M5Window />
      </main>

      <div className="mt-[2px] flex h-[20px] shrink-0 items-start border-t border-black pl-[6px]">
        <button className="-mt-px h-[19px] w-[88px] border border-black border-t-white bg-white">GBPUSD,M1</button>
        <button className="h-[17px] border-none pr-[13px] pl-[12px] text-[#808080]">GBPUSD,M5</button>
        <span className="mt-[3px] h-[13px] w-px bg-[#707070]" />
        <div className="ml-auto flex h-full items-center gap-[15px] pr-[9px]">
          <button aria-label="Назад"><svg width={4} height={6} viewBox="0 0 4 6"><path d="M4 0v6L0 3z" fill="#808080" /></svg></button>
          <button aria-label="Вперёд"><svg width={4} height={6} viewBox="0 0 4 6"><path d="M0 0v6l4-3z" fill="#808080" /></svg></button>
        </div>
      </div>
      <div className="h-px shrink-0 bg-white" />

      <StatusBar />
      <Taskbar />
    </div>
  );
}
